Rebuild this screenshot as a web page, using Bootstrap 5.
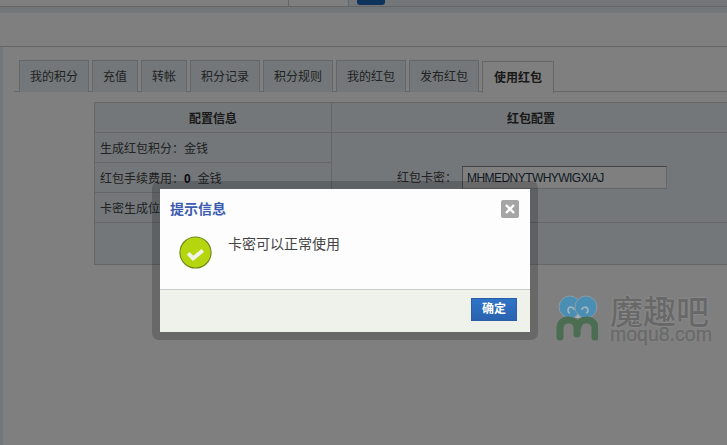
<!DOCTYPE html>
<html lang="zh">
<head>
<meta charset="utf-8">
<link href="https://cdn.jsdelivr.net/npm/bootstrap@5.3.0/dist/css/bootstrap.min.css" rel="stylesheet">
<style>
html,body{height:445px;overflow:hidden}
body{background:#fff;font-family:"Liberation Sans","Noto Sans CJK SC",sans-serif;font-size:12px;color:#444;position:relative}
.topband{height:13px;background:#e8eff4}
.topinner{height:7px;border-bottom:1px solid #c8c8c8;display:flex}
.topfill{width:289px;border-right:1px solid #ccc;background:#fff}
.topfill2{width:60px;border-right:1px solid #ccc;background:#fff}
.topbtn{width:28px;height:5px;background:#1c66ba;border-radius:0 0 3px 3px;margin-left:8px}
.headgap{height:34px;border-bottom:1px solid #ccc}
.mainarea{padding:13px 0 0 11px;border-left:3px solid #e8eff4;height:398px;overflow:hidden}
.tabrow{border-bottom:1px solid #ccc;padding-left:5px;height:32px;gap:3px}
.tabitem{height:32px;border:1px solid #ccc;border-bottom:0;background:#e6eef4;text-align:center;line-height:32px;color:#444;font-size:12px}
.tabitem.w4{width:70px}.tabitem.w2{width:46px}
.tabitem.on{width:72px;background:#fff;font-weight:700;height:32px;position:relative;top:1px;color:#333}
.cfgtable{width:637px;margin:10px 0 0 80px;border-collapse:collapse;background:#e6eef4;table-layout:fixed}
.cfgtable td,.cfgtable th{border:1px solid #ccc;padding:2px 5px 0;height:30px;font-size:12px;color:#444;font-weight:400}
.cfgtable th{font-weight:700;text-align:center;color:#333}
.cfgtable .c1{width:237px}
.cfgtable .lastrow td{height:42px}
.cfgtable b{color:#112}
.cfgtable td.cardcell{padding:0 5px}
.tcolon{font-family:"Noto Sans CJK TC",sans-serif}
.cardinput{width:205px;height:23px;border:1px solid #ccc;border-top-color:#888;border-left-color:#999;background:#fff;font-family:"Liberation Sans",sans-serif;font-size:12px;letter-spacing:-.55px;color:#234;padding:0 4px;margin-left:5px;border-radius:0;outline:0}
.cardwrap{display:flex;align-items:center;padding-left:60px;color:#444;height:60px}
.dimmer{position:absolute;inset:0;background:rgba(0,0,0,.5)}
.logowrap{position:absolute;left:553px;top:295px;width:165px;height:48px;display:flex}
.logotext{display:flex;flex-direction:column;margin-left:12px;text-shadow:0 0 2px #9c9c9c}
.logocn{font-family:"Noto Sans CJK SC",sans-serif;font-size:33px;line-height:30px;color:#686868;font-weight:500;height:30px}
.logoen{font-family:"Liberation Sans",sans-serif;font-size:19.5px;color:#6a6a6a;line-height:16px;margin-top:1px;-webkit-text-stroke:.6px #6a6a6a}
.dlgframe{position:absolute;left:152px;top:181px;width:386px;height:159px;background:rgba(0,0,0,.18);border-radius:7px;padding:8px}
.dlgbox{background:#fdfdfd;height:143px;display:flex;flex-direction:column}
.dlgbody{height:101px;border-bottom:1px solid #ccc;position:relative;padding:10px 10px 0}
.dlgtitle{font-size:14px;font-weight:700;color:#3a5bb0;line-height:20px}
.dlgmsg{gap:16px;padding:15px 0 0 9px;font-size:14px;color:#444;align-items:flex-start}
.dlgmsg svg{margin-top:2px}
.dlgmsg span{line-height:20px}
.dlgclose{position:absolute;right:11px;top:11px;width:18px;height:18px;border-radius:2px;background:#a5a5a5;display:flex;align-items:center;justify-content:center}
.dlgfoot{flex:1;background:#eff1eb;padding:8px 13px 0 0;display:flex;justify-content:flex-end;align-items:flex-start}
.dlgok{width:46px;height:23px;border:1px solid #2a5ca8;background:linear-gradient(#2f74c8,#2a62b0);color:#fff;font-size:12px;font-weight:700;line-height:21px;padding:0;border-radius:0;text-align:center}
</style>
</head>
<body>
<div class="topband"><div class="topinner"><div class="topfill"></div><div class="topfill2"></div><div class="topbtn"></div></div></div>
<div class="headgap"></div>
<div class="mainarea">
  <div class="d-flex tabrow">
    <div class="tabitem w4">我的积分</div><div class="tabitem w2">充值</div><div class="tabitem w2">转帐</div><div class="tabitem w4">积分记录</div><div class="tabitem w4">积分规则</div><div class="tabitem w4">我的红包</div><div class="tabitem w4">发布红包</div><div class="tabitem on">使用红包</div>
  </div>
  <table class="cfgtable">
    <tr><th class="c1">配置信息</th><th>红包配置</th></tr>
    <tr><td>生成红包积分<span class="tcolon">：</span>金钱</td><td rowspan="3" class="cardcell"><div class="cardwrap"><span>红包卡密<span class="tcolon">：</span></span><input class="cardinput" value="MHMEDNYTWHYWIGXIAJ"></div></td></tr>
    <tr><td>红包手续费用<span class="tcolon">：</span><b>0</b>&nbsp; 金钱</td></tr>
    <tr><td>卡密生成位数<span class="tcolon">：</span>18</td></tr>
    <tr class="lastrow"><td colspan="2"></td></tr>
  </table>
</div>
<div class="dimmer"></div>
<div class="logowrap">
  <svg width="45" height="47" viewBox="0 0 45 47"><circle cx="17" cy="12" r="11" fill="#4a8fb3" stroke="#8e9a9f"/><circle cx="33" cy="12" r="11" fill="#4a8fb3" stroke="#8e9a9f"/><path d="M21 15a3 3 0 1 0-4 3M29 15a3 3 0 1 1 4 3" fill="none" stroke="#9fb4bf" stroke-width="1.6"/><path d="M25 19l-3 4h6z" fill="#9fb4bf"/><path d="M7 42V32a8 8 0 0 1 9-7 8 8 0 0 1 8 7v7m1-7a8 8 0 0 1 8-7 8 8 0 0 1 9 7v10" fill="none" stroke="#4b6e52" stroke-width="7" stroke-linecap="round"/></svg>
  <div class="logotext"><div class="logocn">魔趣吧</div><div class="logoen">moqu8.com</div></div>
</div>
<div class="dlgframe">
  <div class="dlgbox">
    <div class="dlgbody">
      <div class="dlgtitle">提示信息</div>
      <div class="d-flex dlgmsg">
        <svg width="33" height="33" viewBox="0 0 34 34"><circle cx="17" cy="17" r="16" fill="#b5d60f" stroke="#6f8a18" stroke-width="1.2"/><path d="M9.5 18l5 5 10-8" fill="none" stroke="#f0f3ea" stroke-width="4"/></svg>
        <span>卡密可以正常使用</span>
      </div>
      <div class="dlgclose"><svg width="10" height="10" viewBox="0 0 10 10"><path d="M1 1l8 8M9 1l-8 8" stroke="#fff" stroke-width="2.4"/></svg></div>
    </div>
    <div class="dlgfoot"><button class="btn dlgok">确定</button></div>
  </div>
</div>
</body>
</html>
